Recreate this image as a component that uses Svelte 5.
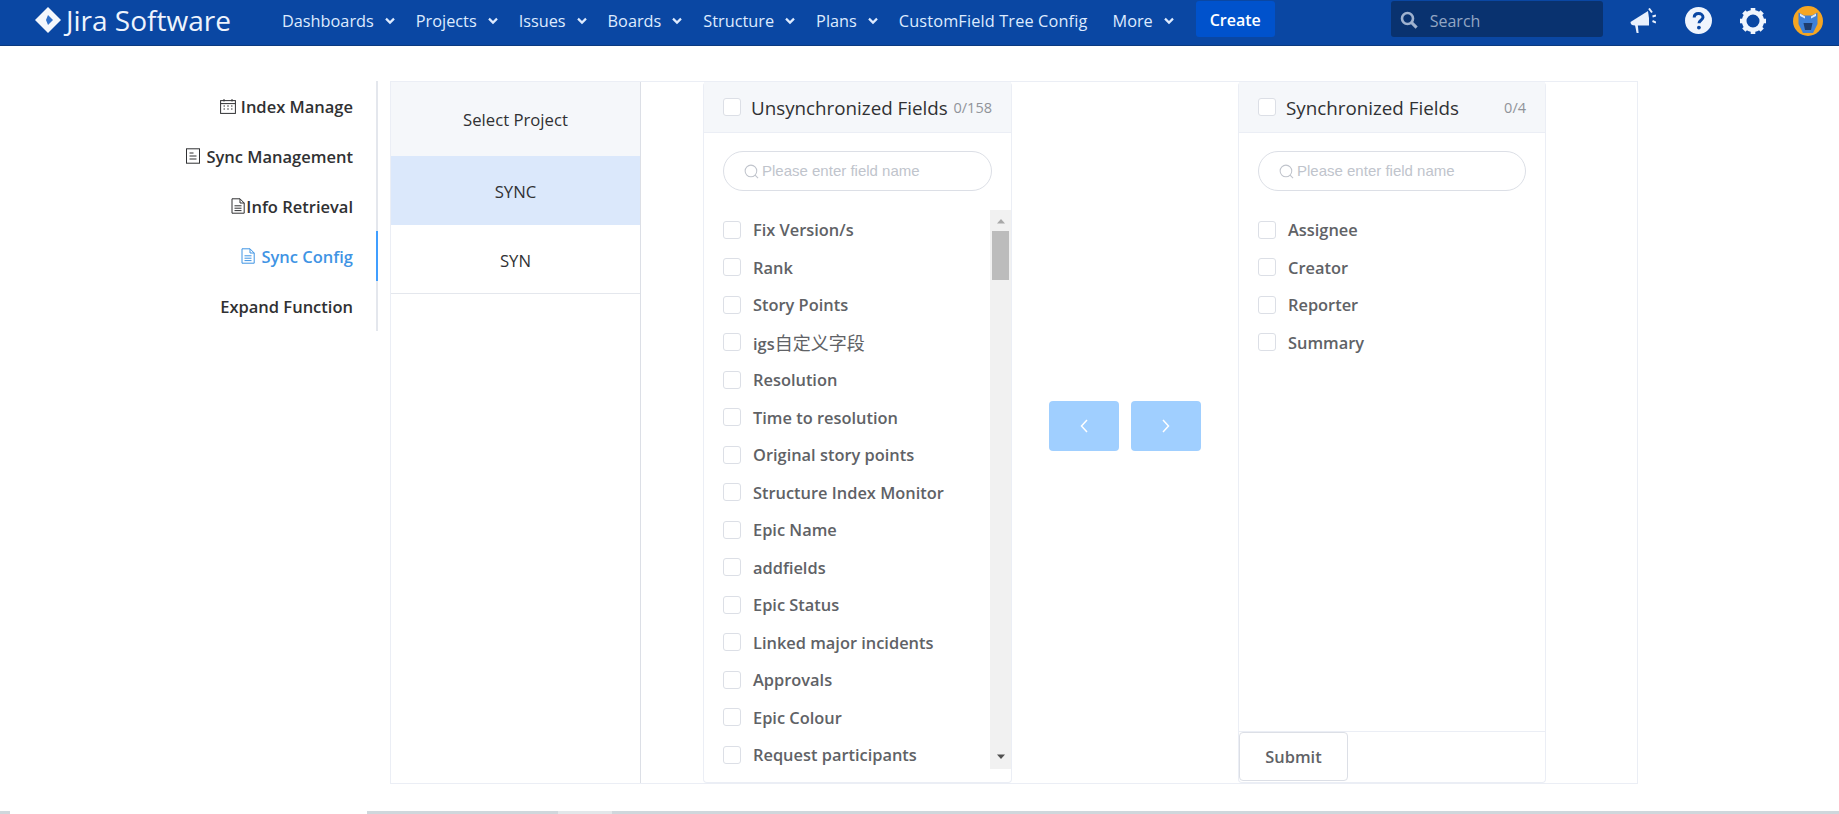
<script>
  const nav = [
    { label: 'Dashboards', caret: true },
    { label: 'Projects', caret: true },
    { label: 'Issues', caret: true },
    { label: 'Boards', caret: true },
    { label: 'Structure', caret: true },
    { label: 'Plans', caret: true },
    { label: 'CustomField Tree Config', caret: false, wide: true },
    { label: 'More', caret: true }
  ];
  const side = [
    { label: 'Index Manage', icon: 'cal' },
    { label: 'Sync Management', icon: 'list' },
    { label: 'Info Retrieval', icon: 'doc', tight: true },
    { label: 'Sync Config', icon: 'doc', active: true },
    { label: 'Expand Function', icon: '' }
  ];
  const left = [
    { t: 'Fix Version/s' }, { t: 'Rank' }, { t: 'Story Points' }, { t: 'igs', cjk: '自定义字段' },
    { t: 'Resolution' }, { t: 'Time to resolution' }, { t: 'Original story points' },
    { t: 'Structure Index Monitor' }, { t: 'Epic Name' }, { t: 'addfields' }, { t: 'Epic Status' },
    { t: 'Linked major incidents' }, { t: 'Approvals' }, { t: 'Epic Colour' }, { t: 'Request participants' }
  ];
  const right = ['Assignee', 'Creator', 'Reporter', 'Summary'];
  const teeth = [0, 45, 90, 135, 180, 225, 270, 315];
</script>

<div class="page">
  <header class="top">
    <div class="brand">
      <svg class="logo" viewBox="0 0 26 26" aria-hidden="true">
        <path d="M13 0 L26 13 L13 26 L0 13 Z" fill="#f4f7fc" />
        <path d="M13 8 L18 13 L13 18 L11 13 Z" fill="#2f6fc9" />
      </svg>
      <span class="brand-text">Jira Software</span>
    </div>
    <nav class="nav">
      {#each nav as n}
        <span class="nav-item" class:wide={n.wide}>
          {n.label}
          {#if n.caret}
            <svg class="caret" viewBox="0 0 10 8" aria-hidden="true"><path d="M1 1.6 L5 5.6 L9 1.6" fill="none" stroke="#deebff" stroke-width="2.2" /></svg>
          {/if}
        </span>
      {/each}
      <span class="create">Create</span>
    </nav>
    <div class="search-top">
      <svg class="search-ico" viewBox="0 0 18 18" aria-hidden="true"><circle cx="7.5" cy="7.5" r="5.5" fill="none" stroke="#9fb2cf" stroke-width="2.6" /><path d="M11.6 11.6 L16.6 16.6" stroke="#9fb2cf" stroke-width="3" /></svg>
      <span class="search-text">Search</span>
    </div>
    <div class="actions">
      <svg class="a-mega" viewBox="0 0 26 26" aria-hidden="true">
        <path d="M0.5 14 L18 3 Q19.5 10 19 17.5 L5 17.5 Q0.5 17.5 0.5 14 Z" fill="#e8f0fd" />
        <path d="M5 17 L7.8 17 L8.6 25 L6.6 25 Z" fill="#e8f0fd" />
        <path d="M19 0.5 L22 4.5 M22.5 8.5 L26 7.5 M22.5 13 L26 14.5" stroke="#e8f0fd" stroke-width="2" fill="none" />
      </svg>
      <svg class="a-help" viewBox="0 0 27 27" aria-hidden="true">
        <circle cx="13.5" cy="13.5" r="13.5" fill="#f0f5fd" />
        <path d="M9.2 10.6 C9.2 7.9 11.2 6.6 13.6 6.6 C16 6.6 18 8 18 10.3 C18 13.4 14 13.2 14 16.2" fill="none" stroke="#0a47a3" stroke-width="3" />
        <circle cx="13.9" cy="20.6" r="1.9" fill="#0a47a3" />
      </svg>
      <svg class="a-gear" viewBox="0 0 26 26" aria-hidden="true">
        <circle cx="13" cy="13" r="8.8" fill="none" stroke="#f0f5fd" stroke-width="4.6" />
        {#each teeth as t}
          <rect x="10.7" y="0" width="4.6" height="5" fill="#f0f5fd" transform="rotate({t} 13 13)" />
        {/each}
      </svg>
      <svg class="a-avatar" viewBox="0 0 30 30" aria-hidden="true">
        <circle cx="15" cy="15" r="15" fill="#f5a623" />
        <path d="M5.5 6.5 L11 9.5 H19 L24.5 6.5 V18 L20 27 H10 L5.5 18 Z" fill="#3e80d8" />
        <path d="M10.5 17 H19.5 L18 24 H12 Z" fill="#1d3c6e" />
        <path d="M7 7.5 L12 10.5 V12.5 L7 10 Z M23 7.5 L18 10.5 V12.5 L23 10 Z" fill="#dbe8fb" />
      </svg>
    </div>
  </header>

  <main class="main">
    <aside class="side">
      {#each side as s}
        <div class="side-item" class:active={s.active} class:tight={s.tight}>
          {#if s.icon === 'cal'}
            <svg class="si" viewBox="0 0 16 16" aria-hidden="true"><rect x="0.6" y="2.6" width="14.8" height="12.8" fill="none" stroke="currentColor" /><path d="M0.6 5.6 H15.4 M4 1 V3.5 M12 1 V3.5" stroke="currentColor" fill="none" /><path d="M3.5 8 H5 M7.2 8 H8.8 M11 8 H12.5 M3.5 11 H5 M7.2 11 H8.8 M11 11 H12.5" stroke="currentColor" fill="none" /></svg>
          {:else if s.icon === 'list'}
            <svg class="si" viewBox="0 0 16 16" aria-hidden="true"><rect x="1.5" y="0.8" width="13" height="14.4" fill="none" stroke="currentColor" /><path d="M4.5 5 H8.5 M4.5 8 H11.5 M4.5 11 H11.5" stroke="currentColor" fill="none" /></svg>
          {:else if s.icon === 'doc'}
            <svg class="si" viewBox="0 0 16 16" aria-hidden="true"><path d="M2 0.8 H10 L14.2 5 V15.2 H2 Z" fill="none" stroke="currentColor" /><path d="M10 0.8 V5 H14.2 M4.5 7.8 H11.5 M4.5 10.2 H11.5 M4.5 12.6 H11.5" stroke="currentColor" fill="none" /></svg>
          {/if}
          <span>{s.label}</span>
        </div>
      {/each}
    </aside>

    <section class="panel">
      <div class="projects">
        <div class="proj-head">Select Project</div>
        <div class="proj-row selected">SYNC</div>
        <div class="proj-row">SYN</div>
      </div>

      <div class="box box-left">
        <div class="box-head">
          <span class="cb"></span>
          <span class="box-title">Unsynchronized Fields</span>
          <span class="count">0/158</span>
        </div>
        <div class="field">
          <svg class="fi" viewBox="0 0 16 16" aria-hidden="true"><circle cx="7.4" cy="7.4" r="6.2" fill="none" stroke="#c0c4cc" stroke-width="1.1" /><path d="M11.8 11.8 L15 15" stroke="#c0c4cc" stroke-width="1.1" /></svg>
          <span class="ph">Please enter field name</span>
        </div>
        <div class="list-wrap">
          <ul class="list">
            {#each left as f}
              <li><span class="cb"></span><span class="f-label">{f.t}{#if f.cjk}<span class="cjk">{f.cjk}</span>{/if}</span></li>
            {/each}
          </ul>
          <div class="scroll">
            <svg class="sa" viewBox="0 0 10 6" aria-hidden="true"><path d="M1 5.5 L5 1 L9 5.5 Z" fill="#a8a8a8" /></svg>
            <div class="thumb"></div>
            <svg class="sa sa-down" viewBox="0 0 10 6" aria-hidden="true"><path d="M1 .5 L5 5 L9 .5 Z" fill="#505050" /></svg>
          </div>
        </div>
      </div>

      <div class="arrows">
        <button class="arrow" aria-label="left"><svg viewBox="0 0 10 16" aria-hidden="true"><path d="M8 2 L2.5 8 L8 14" fill="none" stroke="#fff" stroke-width="1.5" /></svg></button>
        <button class="arrow" aria-label="right"><svg viewBox="0 0 10 16" aria-hidden="true"><path d="M2 2 L7.5 8 L2 14" fill="none" stroke="#fff" stroke-width="1.5" /></svg></button>
      </div>

      <div class="box box-right">
        <div class="box-head">
          <span class="cb"></span>
          <span class="box-title">Synchronized Fields</span>
          <span class="count">0/4</span>
        </div>
        <div class="field">
          <svg class="fi" viewBox="0 0 16 16" aria-hidden="true"><circle cx="7.4" cy="7.4" r="6.2" fill="none" stroke="#c0c4cc" stroke-width="1.1" /><path d="M11.8 11.8 L15 15" stroke="#c0c4cc" stroke-width="1.1" /></svg>
          <span class="ph">Please enter field name</span>
        </div>
        <ul class="list list-right">
          {#each right as f}
            <li><span class="cb"></span><span class="f-label">{f}</span></li>
          {/each}
        </ul>
        <div class="foot"><button class="submit">Submit</button></div>
      </div>
    </section>
  </main>

  <div class="taskbar">
    <i class="t-a"></i><i class="t-b"></i><i class="t-a t-c"></i><i class="t-d"></i><i class="t-a t-e"></i>
  </div>
</div>

<style>
  :global(body) {
    margin: 0;
    background: #fff;
    font-family: "Open Sans", "Noto Sans CJK SC", sans-serif;
  }
  .page {
    height: 814px;
    overflow: hidden;
    display: flex;
    flex-direction: column;
  }
  .top {
    height: 46px;
    box-sizing: border-box;
    flex: none;
    display: flex;
    align-items: center;
    background: #0a47a3;
    border-bottom: 1px solid #0b3a80;
    padding: 0 0 7px 35px;
    color: #deebff;
  }
  .brand {
    display: flex;
    align-items: center;
    width: 247px;
    padding-top: 1px;
  }
  .logo {
    width: 26px;
    height: 26px;
    margin-right: 5px;
    flex: none;
  }
  .brand-text {
    font-size: 28px;
    line-height: 32px;
    color: #eef4fd;
    white-space: nowrap;
  }
  .nav {
    display: flex;
    align-items: center;
    gap: 21px;
  }
  .nav-item {
    display: flex;
    align-items: center;
    gap: 11px;
    padding-top: 3px;
    font-size: 16.3px;
    white-space: nowrap;
  }
  .nav-item.wide {
    letter-spacing: 0.15px;
    padding-right: 4px;
  }
  .caret {
    width: 10px;
    height: 8px;
  }
  .create {
    background: #0052cc;
    color: #fff;
    font-size: 16px;
    font-weight: 600;
    height: 36px;
    width: 79px;
    line-height: 39px;
    text-align: center;
    border-radius: 3px;
    margin-left: 1px;
  }
  .search-top {
    margin-left: 116px;
    width: 212px;
    height: 36px;
    background: #09326f;
    border-radius: 3px;
    display: flex;
    align-items: center;
    gap: 12px;
    padding-left: 9px;
    box-sizing: border-box;
    color: #93a6c4;
    font-size: 16px;
  }
  .search-ico {
    width: 18px;
    height: 18px;
    margin-top: 2px;
  }
  .search-text {
    padding-top: 3px;
  }
  .actions {
    display: flex;
    align-items: center;
    margin-left: 27px;
    padding-top: 3px;
    gap: 28px;
  }
  .a-mega { width: 26px; height: 26px; }
  .a-help { width: 27px; height: 27px; margin-left: 1px; }
  .a-gear { width: 26px; height: 26px; }
  .a-avatar { width: 30px; height: 30px; margin-left: -1px; }

  .main {
    flex: none;
    display: flex;
    padding-top: 35px;
    height: 703px;
  }
  .side {
    width: 378px;
    height: 250px;
    box-sizing: border-box;
    border-right: 2px solid #e4e7ed;
    margin-right: 12px;
    flex: none;
  }
  .side-item {
    height: 50px;
    margin-right: -2px;
    padding: 0 25px 0 0;
    box-sizing: border-box;
    display: flex;
    align-items: center;
    justify-content: flex-end;
    gap: 5px;
    font-size: 16.5px;
    font-weight: 600;
    color: #303133;
  }
  .side-item.tight { gap: 0; }
  .side-item.active {
    color: #3f94e4;
    border-right: 2px solid #409eff;
    padding-right: 23px;
  }
  .si {
    width: 16px;
    height: 16px;
  }
  .panel {
    width: 1248px;
    box-sizing: border-box;
    border: 1px solid #ebeef5;
    display: flex;
    height: 703px;
  }
  .projects {
    width: 249px;
    flex: none;
    border-right: 1px solid #dcdfe6;
    margin-right: 62px;
    font-size: 16.7px;
    color: #303133;
    text-align: center;
  }
  .proj-head {
    height: 74px;
    line-height: 76px;
    background: #f5f7fa;
  }
  .proj-row {
    height: 68px;
    line-height: 72px;
    border-bottom: 1px solid #e4e7ed;
  }
  .proj-row.selected {
    background: #dbe8fb;
    border-bottom-color: #dbe8fb;
  }

  .box {
    flex: none;
    box-sizing: border-box;
    border: 1px solid #ebeef5;
    border-top: 0;
    border-radius: 4px;
    display: flex;
    flex-direction: column;
  }
  .box-left { width: 309px; }
  .box-right { width: 308px; }
  .box-head {
    height: 51px;
    box-sizing: border-box;
    flex: none;
    background: #f5f7fa;
    border-bottom: 1px solid #ebeef5;
    display: flex;
    align-items: center;
    padding: 0 19px;
  }
  .box-title {
    font-size: 18.8px;
    padding-top: 2px;
    color: #303133;
    margin-left: 10px;
    white-space: nowrap;
  }
  .count {
    margin-left: auto;
    font-size: 14.5px;
    color: #909399;
  }
  .cb {
    width: 18px;
    height: 18px;
    box-sizing: border-box;
    border: 1px solid #dcdfe6;
    border-radius: 3px;
    background: #fff;
    flex: none;
  }
  .field {
    flex: none;
    margin: 18px 19px 19px;
    height: 40px;
    box-sizing: border-box;
    border: 1px solid #dcdfe6;
    border-radius: 20px;
    display: flex;
    align-items: center;
    padding-left: 20px;
    gap: 3px;
  }
  .fi {
    width: 15px;
    height: 15px;
  }
  .ph {
    font-family: "Liberation Sans", sans-serif;
    font-size: 15px;
    color: #c0c4cc;
    white-space: nowrap;
    padding-bottom: 2px;
  }
  .list-wrap {
    flex: none;
    display: flex;
    height: 559px;
  }
  .list {
    list-style: none;
    margin: 0;
    padding: 1px 0 0;
    flex: 1;
    overflow: hidden;
  }
  .list li {
    height: 37.5px;
    display: flex;
    align-items: center;
    padding-left: 19px;
  }
  .f-label {
    margin-left: 12px;
    font-size: 16.4px;
    font-weight: 600;
    color: #606266;
    white-space: nowrap;
  }
  .cjk {
    font-family: "Noto Sans CJK SC", sans-serif;
    font-size: 18px;
    font-weight: 400;
  }
  .scroll {
    width: 21px;
    flex: none;
    background: #f1f1f1;
    display: flex;
    flex-direction: column;
    align-items: center;
    padding-top: 8px;
    box-sizing: border-box;
  }
  .sa {
    width: 10px;
    height: 6px;
    flex: none;
  }
  .thumb {
    width: 17px;
    height: 49px;
    background: #bcbcbc;
    margin-top: 7px;
  }
  .sa-down {
    margin-top: auto;
    margin-bottom: 9px;
  }
  .arrows {
    width: 226px;
    flex: none;
    display: flex;
    align-items: center;
    justify-content: center;
    gap: 12px;
    box-sizing: border-box;
    padding-bottom: 13px;
  }
  .arrow {
    width: 70px;
    height: 50px;
    border: 0;
    padding: 0;
    background: #a0cfff;
    border-radius: 4px;
    display: flex;
    align-items: center;
    justify-content: center;
  }
  .arrow svg {
    width: 10px;
    height: 16px;
  }
  .list-right {
    flex: 1;
  }
  .foot {
    flex: none;
    height: 51px;
    box-sizing: border-box;
    border-top: 1px solid #ebeef5;
  }
  .submit {
    width: 109px;
    height: 49px;
    background: #fff;
    border: 1px solid #dcdfe6;
    border-radius: 4px;
    font-family: inherit;
    font-size: 16.4px;
    font-weight: 600;
    color: #606266;
    padding: 0;
    display: block;
  }
  .taskbar {
    margin-top: auto;
    height: 3px;
    flex: none;
    display: flex;
  }
  .taskbar i { display: block; }
  .t-a { width: 10px; background: #cfd7dc; }
  .t-b { width: 357px; background: #fff; }
  .t-c { width: 191px; }
  .t-d { width: 54px; background: #e3e7ea; }
  .t-e { flex: 1; }
</style>
